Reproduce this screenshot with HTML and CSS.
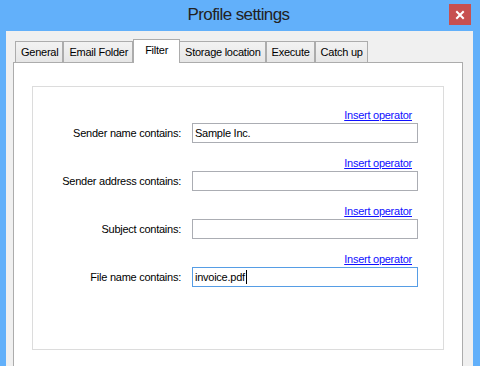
FILE: index.html
```html
<!DOCTYPE html>
<html lang="en">
<head>
  <meta charset="UTF-8">
  <title>Profile settings</title>
  <link rel="stylesheet" href="styles.css">
</head>
<body>

  <div class="titlebar">
    <span class="title">Profile settings</span>
    <button class="close" title="Close">
      <svg width="22" height="21" viewBox="0 0 22 21">
        <path d="M8 8 L14 14 M14 8 L8 14" stroke="#fff" stroke-width="2" stroke-linecap="square"/>
      </svg>
    </button>
  </div>

  <div class="window-body">
    <div class="tabs">
      <div class="tab">General</div>
      <div class="tab">Email Folder</div>
      <div class="tab selected">Filter</div>
      <div class="tab">Storage location</div>
      <div class="tab">Execute</div>
      <div class="tab">Catch up</div>
    </div>

    <div class="panel">
      <div class="group">
        <div class="row">
          <a href="#" class="op">Insert operator</a>
          <label>Sender name contains:</label>
          <div class="field">Sample Inc.</div>
        </div>
        <div class="row">
          <a href="#" class="op">Insert operator</a>
          <label>Sender address contains:</label>
          <div class="field"></div>
        </div>
        <div class="row">
          <a href="#" class="op">Insert operator</a>
          <label>Subject contains:</label>
          <div class="field"></div>
        </div>
        <div class="row">
          <a href="#" class="op">Insert operator</a>
          <label>File name contains:</label>
          <div class="field focused">invoice.pdf<span class="caret"></span></div>
        </div>
      </div>
    </div>
  </div>

</body>
</html>
```

FILE: styles.css
```css
body {
  margin: 0;
  height: 366px;
  overflow: hidden;
  background-color: #62b0fa;
  font-family: "Liberation Sans", Arial, sans-serif;
  font-size: 11px;
  letter-spacing: -0.25px;
  color: #000;
}

.titlebar {
  position: relative;
  height: 31px;
  text-align: center;
}

.title {
  display: inline-block;
  padding: 1px 3px 0 0;
  line-height: 28px;
  font-size: 17px;
  letter-spacing: -0.6px;
  color: #222;
}

.close {
  position: absolute;
  top: 4px;
  right: 9px;
  width: 22px;
  height: 21px;
  padding: 0;
  border: none;
  background-color: #c75050;
}

.close svg {
  display: block;
}

.window-body {
  margin-left: 6px;
  width: 467px;
  height: 335px;
  box-sizing: border-box;
  padding: 8px 10px 0 7px;
  background-color: #f0f0f0;
}

.tabs {
  display: flex;
  align-items: flex-end;
  margin: 0 0 -1px 2px;
}

.tab {
  margin-bottom: 1px;
  padding: 0 4px 0 5px;
  line-height: 20px;
  border: 1px solid #acacac;
  border-bottom: none;
  background: linear-gradient(#f2f2f2, #e6e6e6);
  white-space: nowrap;
}

.tab.selected {
  position: relative;
  z-index: 1;
  margin: 0 -1px 0 0;
  padding: 0 11px 3px;
  background: #fff;
}

.panel {
  height: 280px;
  padding: 23px 18px 0;
  border: 1px solid #acacac;
  background-color: #fff;
}

.group {
  height: 264px;
  box-sizing: border-box;
  padding: 21px 25px 0 0;
  border: 1px solid #dcdcdc;
}

.row {
  display: grid;
  grid-template-columns: 1fr 226px;
  column-gap: 11px;
  align-items: center;
  margin-bottom: 13px;
}

.op {
  grid-column: 2;
  justify-self: end;
  margin-right: 6px;
  line-height: 15px;
  color: #1010ff;
  text-decoration: underline;
}

.row label {
  grid-column: 1;
  text-align: right;
  white-space: nowrap;
}

.field {
  grid-column: 2;
  height: 20px;
  box-sizing: border-box;
  padding-left: 2px;
  line-height: 18px;
  border: 1px solid #abadb3;
  background-color: #fff;
}

.field.focused {
  border-color: #569de5;
}

.caret {
  display: inline-block;
  width: 1px;
  height: 14px;
  margin-left: 1px;
  vertical-align: -3px;
  background-color: #000;
}
```
